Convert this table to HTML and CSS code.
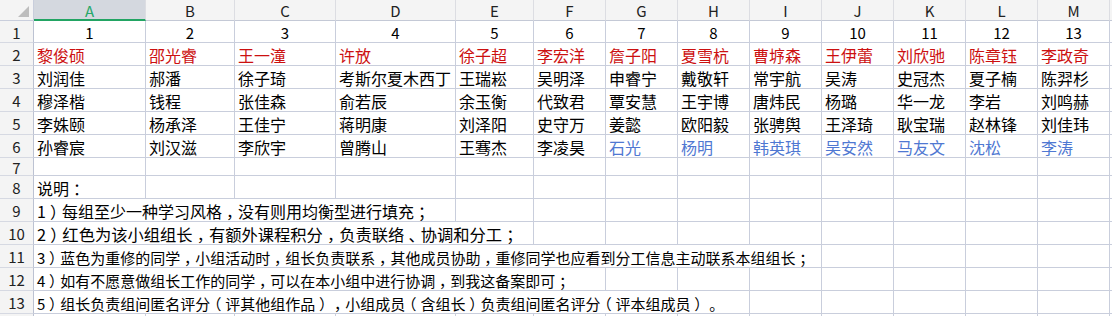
FILE: index.html
```html
<!DOCTYPE html>
<html lang="zh-CN">
<head>
<meta charset="utf-8">
<title>分组</title>
<link rel="stylesheet" href="styles.css">
</head>
<body>
<div class="sheet">
  <div class="corner"><svg width="33" height="20" viewBox="0 0 33 20"><polygon points="18,17 29,17 29,6" fill="#bdbdbd"/></svg></div>
  <div class="ch sel">A</div><div class="ch">B</div><div class="ch">C</div><div class="ch">D</div><div class="ch">E</div><div class="ch">F</div><div class="ch">G</div><div class="ch">H</div><div class="ch">I</div><div class="ch">J</div><div class="ch">K</div><div class="ch">L</div><div class="ch">M</div><div class="ch"></div>

  <div class="rh">1</div>
  <div class="c num">1</div><div class="c num">2</div><div class="c num">3</div><div class="c num">4</div><div class="c num">5</div><div class="c num">6</div><div class="c num">7</div><div class="c num">8</div><div class="c num">9</div><div class="c num">10</div><div class="c num">11</div><div class="c num">12</div><div class="c num">13</div><div class="c"></div>

  <div class="rh">2</div>
  <div class="c red">黎俊硕</div><div class="c red">邵光睿</div><div class="c red">王一潼</div><div class="c red">许放</div><div class="c red">徐子超</div><div class="c red">李宏洋</div><div class="c red">詹子阳</div><div class="c red">夏雪杭</div><div class="c red">曹垿森</div><div class="c red">王伊蕾</div><div class="c red">刘欣驰</div><div class="c red">陈章钰</div><div class="c red">李政奇</div><div class="c"></div>

  <div class="rh">3</div>
  <div class="c">刘润佳</div><div class="c">郝潘</div><div class="c">徐子琦</div><div class="c">考斯尔夏木西丁</div><div class="c">王瑞崧</div><div class="c">吴明泽</div><div class="c">申睿宁</div><div class="c">戴敬轩</div><div class="c">常宇航</div><div class="c">吴涛</div><div class="c">史冠杰</div><div class="c">夏子楠</div><div class="c">陈羿杉</div><div class="c"></div>

  <div class="rh">4</div>
  <div class="c">穆泽楷</div><div class="c">钱程</div><div class="c">张佳森</div><div class="c">俞若辰</div><div class="c">余玉衡</div><div class="c">代致君</div><div class="c">覃安慧</div><div class="c">王宇博</div><div class="c">唐炜民</div><div class="c">杨璐</div><div class="c">华一龙</div><div class="c">李岩</div><div class="c">刘鸣赫</div><div class="c"></div>

  <div class="rh">5</div>
  <div class="c">李姝颐</div><div class="c">杨承泽</div><div class="c">王佳宁</div><div class="c">蒋明康</div><div class="c">刘泽阳</div><div class="c">史守万</div><div class="c">姜懿</div><div class="c">欧阳毅</div><div class="c">张骋舆</div><div class="c">王泽琦</div><div class="c">耿宝瑞</div><div class="c">赵林锋</div><div class="c">刘佳玮</div><div class="c"></div>

  <div class="rh">6</div>
  <div class="c">孙睿宸</div><div class="c">刘汉滋</div><div class="c">李欣宇</div><div class="c">曾腾山</div><div class="c">王骞杰</div><div class="c">李凌昊</div><div class="c blue">石光</div><div class="c blue">杨明</div><div class="c blue">韩英琪</div><div class="c blue">吴安然</div><div class="c blue">马友文</div><div class="c blue">沈松</div><div class="c blue">李涛</div><div class="c"></div>

  <div class="rh">7</div>
  <div class="c"></div><div class="c"></div><div class="c"></div><div class="c"></div><div class="c"></div><div class="c"></div><div class="c"></div><div class="c"></div><div class="c"></div><div class="c"></div><div class="c"></div><div class="c"></div><div class="c"></div><div class="c"></div>

  <div class="rh">8</div>
  <div class="c">说明<span class="p">：</span></div><div class="c"></div><div class="c"></div><div class="c"></div><div class="c"></div><div class="c"></div><div class="c"></div><div class="c"></div><div class="c"></div><div class="c"></div><div class="c"></div><div class="c"></div><div class="c"></div><div class="c"></div>

  <div class="rh">9</div>
  <div class="c note n9 span4">1<span class="p">）</span>每组至少一种学习风格<span class="p">，</span>没有则用均衡型进行填充<span class="p">；</span></div><div class="c"></div><div class="c"></div><div class="c"></div><div class="c"></div><div class="c"></div><div class="c"></div><div class="c"></div><div class="c"></div><div class="c"></div><div class="c"></div>

  <div class="rh">10</div>
  <div class="c note n10 span5">2<span class="p">）</span>红色为该小组组长<span class="p">，</span>有额外课程积分<span class="p">，</span>负责联络<span class="p">、</span>协调和分工<span class="p">；</span></div><div class="c"></div><div class="c"></div><div class="c"></div><div class="c"></div><div class="c"></div><div class="c"></div><div class="c"></div><div class="c"></div><div class="c"></div>

  <div class="rh">11</div>
  <div class="c note span9">3<span class="p">）</span>蓝色为重修的同学<span class="p">，</span>小组活动时<span class="p">，</span>组长负责联系<span class="p">，</span>其他成员协助<span class="p">，</span>重修同学也应看到分工信息主动联系本组组长<span class="p">；</span></div><div class="c"></div><div class="c"></div><div class="c"></div><div class="c"></div><div class="c"></div>

  <div class="rh">12</div>
  <div class="c note span6">4<span class="p">）</span>如有不愿意做组长工作的同学<span class="p">，</span>可以在本小组中进行协调<span class="p">，</span>到我这备案即可<span class="p">；</span></div><div class="c"></div><div class="c"></div><div class="c"></div><div class="c"></div><div class="c"></div><div class="c"></div><div class="c"></div><div class="c"></div>

  <div class="rh">13</div>
  <div class="c note span8">5<span class="p">）</span>组长负责组间匿名评分<span class="p">（</span>评其他组作品<span class="p">）</span><span class="p">，</span>小组成员<span class="p">（</span>含组长<span class="p">）</span>负责组间匿名评分<span class="p">（</span>评本组成员<span class="p">）</span><span class="p">。</span></div><div class="c"></div><div class="c"></div><div class="c"></div><div class="c"></div><div class="c"></div><div class="c"></div>

  <div class="rh"></div>
  <div class="c"></div><div class="c"></div><div class="c"></div><div class="c"></div><div class="c"></div><div class="c"></div><div class="c"></div><div class="c"></div><div class="c"></div><div class="c"></div><div class="c"></div><div class="c"></div><div class="c"></div><div class="c"></div>
</div>
</body>
</html>
```

FILE: styles.css
```css
html, body {
  margin: 0;
  padding: 0;
  background: #ffffff;
  overflow: hidden;
}

.sheet {
  display: grid;
  grid-template-columns: 34px 112px 89px 101px 120px 78px repeat(8, 72px) 1fr;
  grid-template-rows: 21px 22px repeat(5, 23px) 18px repeat(6, 23px) 23px;
  width: 1112px;
  height: 316px;
  overflow: hidden;
  font-family: "Noto Sans CJK SC", "Noto Sans", sans-serif;
  font-size: 16px;
  color: #000000;
}

.sheet > div {
  box-sizing: border-box;
  border-right: 1px solid #c9cedc;
  border-bottom: 1px solid #c9cedc;
  display: flex;
  align-items: center;
  white-space: nowrap;
  overflow: hidden;
  min-width: 0;
}

.corner {
  background: #f4f4f4;
  padding: 0;
}

.corner svg {
  display: block;
}

.ch {
  background: #f4f4f4;
  justify-content: center;
  color: #222222;
  font-size: 15px;
  border-right-color: #dcdde2 !important;
  border-bottom-color: #c4c9d6 !important;
  padding-top: 1px;
}

.ch.sel {
  background: #d4d8df;
  color: #27a86a;
  border-bottom: 2px solid #22a463 !important;
}

.rh {
  background: #f4f4f4;
  justify-content: center;
  color: #222222;
  font-size: 15px;
  border-right-color: #bcc2d2 !important;
  border-bottom-color: #d6d9e2 !important;
  padding-top: 1px;
}

.c {
  padding: 2px 0 0 3px;
  background: #ffffff;
}

.num {
  justify-content: center;
  padding-left: 0;
  font-size: 15px;
}

.red {
  color: #cc1010;
}

.blue {
  color: #4f78d2;
}

.note {
  overflow: visible;
  font-size: 15px;
}

.note.n9 {
  font-size: 16px;
}

.note.n10 {
  font-size: 16.3px;
}

.p {
  display: inline-block;
  width: 1em;
  text-align: center;
  font-feature-settings: "halt";
}

.span4 { grid-column: span 4; }
.span5 { grid-column: span 5; }
.span6 { grid-column: span 6; }
.span8 { grid-column: span 8; }
.span9 { grid-column: span 9; }
```
